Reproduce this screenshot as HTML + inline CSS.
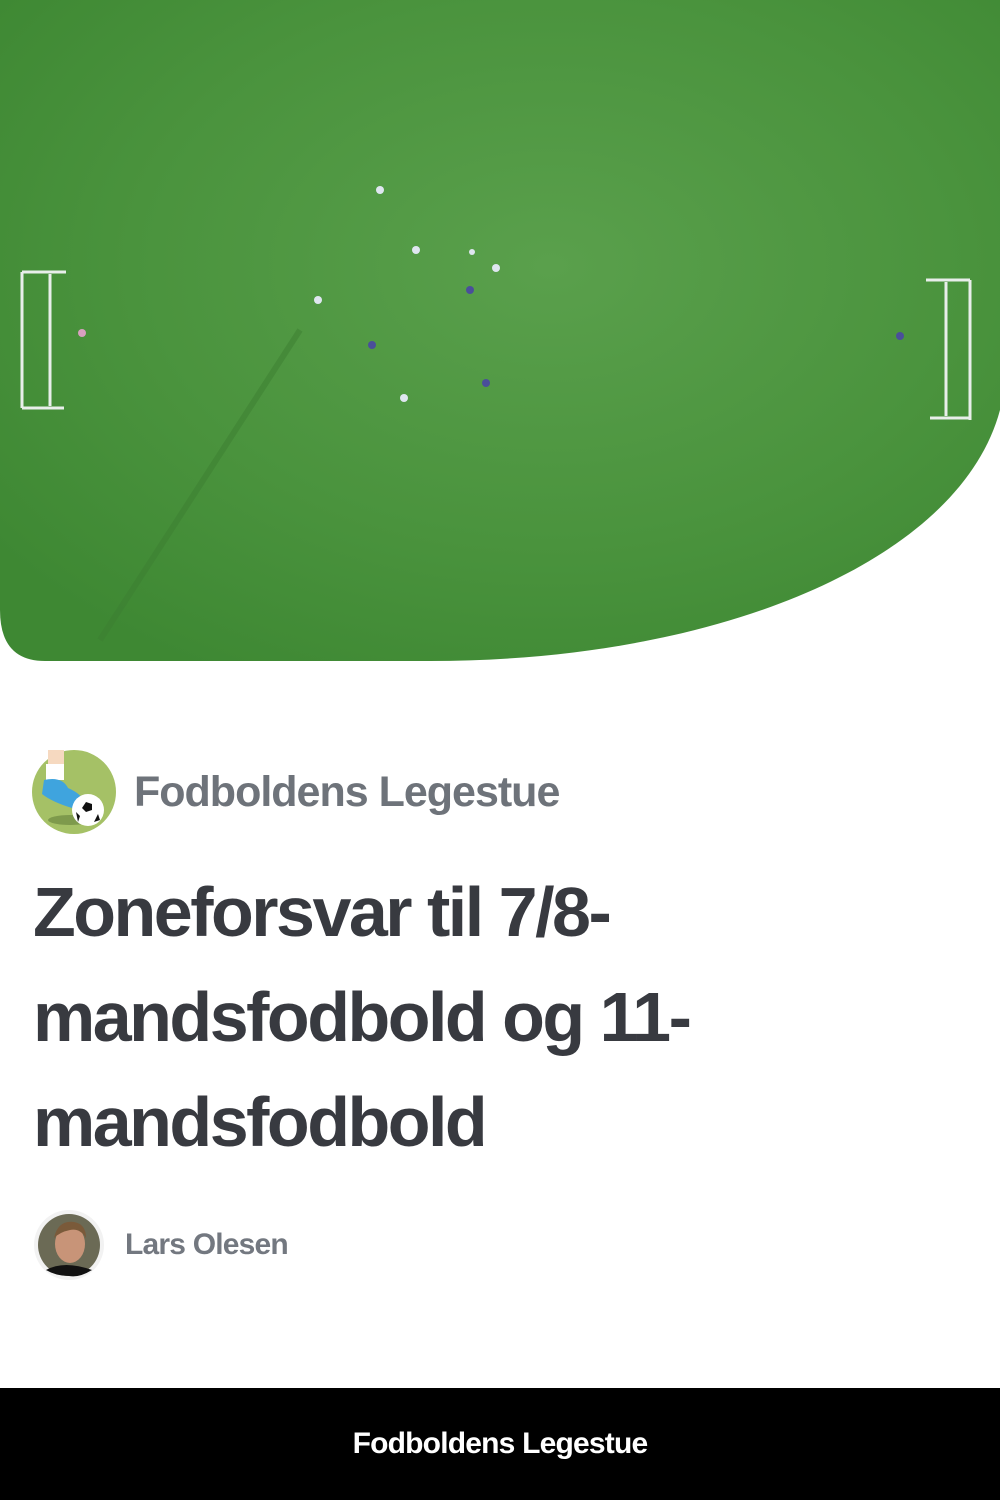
<!DOCTYPE html>
<html><head><meta charset="utf-8"><style>
body{margin:0;width:1000px;height:1500px;background:#fff;font-family:"Liberation Sans",sans-serif;position:relative;overflow:hidden}
svg.hero{position:absolute;left:0;top:0}
.brand{position:absolute;left:32px;top:750px;display:flex;align-items:center}
.brand span{margin-left:18px;font-size:43px;font-weight:bold;color:#6e737a;letter-spacing:-1px}
h1{position:absolute;left:33px;top:860px;margin:0;width:900px;font-size:70px;line-height:105px;color:#383a40;font-weight:bold;letter-spacing:-2.5px}
.author{position:absolute;left:34px;top:1210px;display:flex;align-items:center}
.author span{margin-left:21px;font-size:30px;color:#737880;font-weight:bold;letter-spacing:-0.8px}
.foot{position:absolute;left:0;top:1388px;width:1000px;height:112px;background:#000;color:#fff;text-align:center;font-size:30px;font-weight:bold;line-height:112px;letter-spacing:-0.8px}
</style></head><body>
<svg class="hero" width="1000" height="665" viewBox="0 0 1000 665">
<defs>
<clipPath id="c"><path d="M0,0 H1000 V410 C960,560 720,661 430,661 H45 Q0,661 0,610 Z"/></clipPath>
<radialGradient id="g" cx="0.55" cy="0.4" r="0.7">
<stop offset="0" stop-color="#5aa04c"/><stop offset="0.6" stop-color="#4a933d"/><stop offset="1" stop-color="#3e8833"/></radialGradient>
</defs>
<g clip-path="url(#c)">
<rect width="1000" height="665" fill="url(#g)"/>
<path d="M300,330 L100,640" stroke="#3d7f32" stroke-width="6" opacity="0.5"/>
<g stroke="#e8eeea" stroke-width="3" fill="none">
<path d="M22,272 V408 M22,272 H66 M22,408 H64 M50,274 V406"/>
<path d="M970,280 V420 M926,280 H970 M930,418 H970 M946,282 V416"/>
</g>
<g fill="#dfe6f0">
<circle cx="380" cy="190" r="4"/><circle cx="416" cy="250" r="4"/><circle cx="318" cy="300" r="4"/>
<circle cx="472" cy="252" r="3"/><circle cx="496" cy="268" r="4"/><circle cx="404" cy="398" r="4"/>
</g>
<g fill="#4a4f9a"><circle cx="470" cy="290" r="4"/><circle cx="372" cy="345" r="4"/><circle cx="486" cy="383" r="4"/><circle cx="900" cy="336" r="4"/></g>
<circle cx="82" cy="333" r="4" fill="#d8a0c0"/>
</g>
</svg>
<div class="brand">
<svg width="84" height="84" viewBox="0 0 84 84">
<circle cx="42" cy="42" r="42" fill="#a5c166"/>
<ellipse cx="38" cy="70" rx="22" ry="5" fill="#7e9a4c"/>
<rect x="16" y="0" width="16" height="16" fill="#f6d9c0"/>
<rect x="14" y="14" width="18" height="16" fill="#fff"/>
<path d="M12,30 Q30,26 36,38 Q50,44 54,54 L40,58 Q20,52 10,44 Z" fill="#3fa4de"/>
<circle cx="56" cy="60" r="16" fill="#fff"/>
<path d="M54,52 l6,2 l0,6 l-6,2 l-4,-4 Z M44,62 l4,4 l-2,6 Z M66,64 l2,6 l-6,2 Z" fill="#111"/>
</svg>
<span>Fodboldens Legestue</span>
</div>
<h1>Zoneforsvar til 7/8-mandsfodbold og 11-mandsfodbold</h1>
<div class="author">
<svg width="70" height="70" viewBox="0 0 70 70">
<circle cx="35" cy="35" r="35" fill="#f2f2f2"/>
<circle cx="35" cy="35" r="31" fill="#6b6a55"/>
<ellipse cx="36" cy="34" rx="15" ry="19" fill="#c89478"/>
<path d="M20,28 Q24,10 40,12 Q52,14 52,28 Q46,18 36,20 Q26,22 20,28 Z" fill="#7a5a3a"/>
<path d="M12,60 Q30,50 58,60 Q45,68 35,66 Q22,66 12,60 Z" fill="#111"/>
</svg>
<span>Lars Olesen</span>
</div>
<div class="foot">Fodboldens Legestue</div>
</body></html>
